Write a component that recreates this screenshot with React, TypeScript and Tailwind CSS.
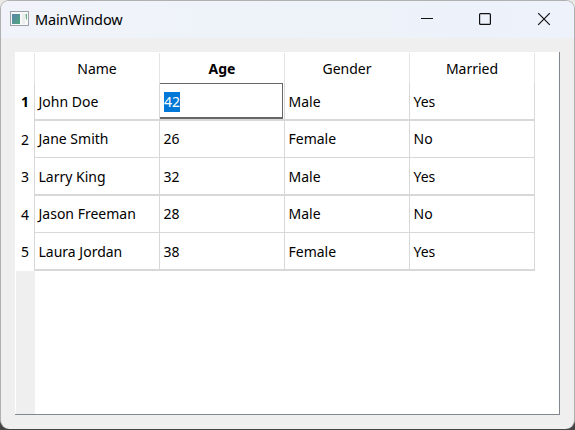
const columns = [
  { title: 'Name', active: false },
  { title: 'Age', active: true },
  { title: 'Gender', active: false },
  { title: 'Married', active: false },
];

const people = [
  { cells: ['John Doe', '42', 'Male', 'Yes'], row: 'h-[38px] border-b-2', text: 'pt-[9px]' },
  { cells: ['Jane Smith', '26', 'Female', 'No'], row: 'h-[37px] border-b', text: 'pt-2' },
  { cells: ['Larry King', '32', 'Male', 'Yes'], row: 'h-[38px] border-b-2', text: 'pt-[9px]' },
  { cells: ['Jason Freeman', '28', 'Male', 'No'], row: 'h-[37px] border-b', text: 'pt-2' },
  { cells: ['Laura Jordan', '38', 'Female', 'Yes'], row: 'h-[38px] border-b-2', text: 'pt-[9px]' },
];

function TitleBar() {
  return (
    <header className="flex h-[37px] shrink-0 bg-linear-to-r from-[#f0f3fa] via-[#eef3f9] to-[#edf2fb] pl-[9px]">
      <svg className="mt-[10px] shrink-0" width="19" height="15" viewBox="0 0 19 15">
        <defs>
          <linearGradient id="appIcon" x1="0" y1="0" x2="1" y2="1">
            <stop offset="0" stopColor="#5a83b0" />
            <stop offset="1" stopColor="#4fa67c" />
          </linearGradient>
        </defs>
        <rect x=".5" y=".5" width="18" height="14" fill="#f8f9f9" stroke="#9ba1a7" />
        <rect x="2" y="3" width="8" height="10" fill="url(#appIcon)" />
        <rect x="12" y="3" width="3" height="10" fill="#eceeed" />
        <path d="M15.5 3h1.5v6l-1-1z" fill="#67ad83" />
      </svg>
      <h1 className="mt-2 ml-[6px] text-[14.5px] leading-5 tracking-[-0.15px]">MainWindow</h1>
      <svg className="mt-[11px] mr-[22px] ml-auto shrink-0" width="131" height="14" viewBox="0 0 131 14" fill="none" stroke="#111" strokeWidth="1.2">
        <path d="M0 6.5h12" />
        <rect x="58.6" y="1.6" width="10.8" height="10.8" rx="1" />
        <path d="M117.2 1.2l11.6 11.6M128.8 1.2L117.2 12.8" />
      </svg>
    </header>
  );
}

function Cell({ value, pad, editing }: { value: string; pad: string; editing: boolean }) {
  if (editing) {
    return (
      <div className="w-[125px] border-r border-[#d8d8d8]">
        <div className="h-9 w-[123px] border-t border-r border-b-2 border-[#666] pt-2 pl-1">
          <span className="block h-5 w-4 bg-[#0078d7] leading-5 text-white">{value}</span>
        </div>
      </div>
    );
  }
  return <div className={`w-[125px] border-r border-[#d8d8d8] pl-[3.5px] leading-5 whitespace-nowrap ${pad}`}>{value}</div>;
}

export default function App() {
  return (
    <div className="h-[430px] w-[575px] bg-linear-to-b from-[#e9e9e7] from-50% to-[#444] to-95% font-['Noto_Sans','Open_Sans',sans-serif] text-[14px] text-black">
      <div className="flex h-[429px] flex-col overflow-hidden rounded-[9px] border border-b-0 border-[#b0b0b0] bg-[#efefef]">
        <TitleBar />
        <main className="mt-[14px] ml-[14px] h-[363px] w-[545px] border-r border-b border-[#82878f] bg-white">
          <div className="flex h-[362px]">
            <aside className="flex w-[19px] shrink-0 flex-col border-l border-white bg-[#efefef]">
              <div className="h-[31px] bg-white" />
              {people.map((person, i) => (
                <div key={person.cells[0]} className={`${i % 2 ? 'h-[37px]' : 'h-[38px]'} bg-white pt-[9px] text-center leading-5 ${i === 0 ? 'font-bold' : ''}`}>
                  {i + 1}
                </div>
              ))}
            </aside>
            <section className="flex w-[501px] flex-col">
              <div className="flex h-[31px] border-t border-white">
                <div className="w-px bg-[#e5e5e5]" />
                {columns.map((column) => (
                  <div key={column.title} className={`w-[125px] border-r border-[#e5e5e5] pt-[6px] text-center leading-5 ${column.active ? 'font-bold' : ''}`}>
                    {column.title}
                  </div>
                ))}
              </div>
              {people.map((person, i) => (
                <div key={person.cells[0]} className={`flex border-[#d8d8d8] ${person.row}`}>
                  <div className="w-px bg-[#d8d8d8]" />
                  {person.cells.map((value, j) => (
                    <Cell key={j} value={value} pad={person.text} editing={i === 0 && j === 1} />
                  ))}
                </div>
              ))}
              <div className="w-px grow bg-[#efefef]" />
            </section>
          </div>
        </main>
      </div>
    </div>
  );
}
